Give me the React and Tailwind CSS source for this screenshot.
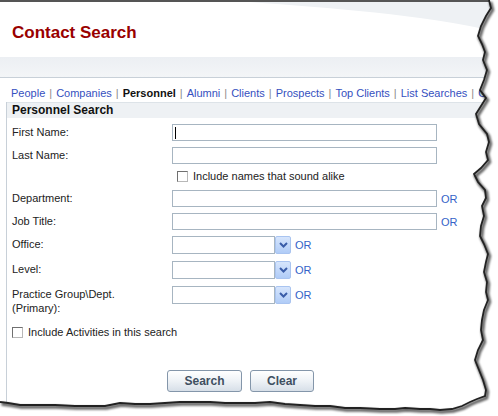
import React from 'react';

const tabs = ['People', 'Companies', 'Personnel', 'Alumni', 'Clients', 'Prospects', 'Top Clients', 'List Searches', 'Other'];

// torn paper outline, right side then bottom
const edge = [
  [489, 0], [491, 8], [486, 16], [481, 26], [478, 36], [482, 44], [485, 52], [483, 60], [487, 70], [484, 80],
  [480, 90], [486, 98], [481, 106], [476, 114], [479, 124], [487, 134], [489, 142], [486, 152], [488, 160],
  [481, 168], [474, 174], [478, 182], [485, 190], [486, 198], [482, 206], [484, 216], [481, 226], [480, 236],
  [484, 244], [488, 254], [486, 262], [484, 272], [487, 282], [486, 292], [488, 300], [484, 310], [482, 320],
  [481, 330], [483, 340], [478, 350], [475, 360], [479, 370], [483, 380], [486, 390], [485, 396], [477, 399],
  [470, 402], [462, 406], [452, 409], [440, 410], [430, 409], [420, 409], [405, 408], [395, 409], [380, 409],
  [360, 408], [345, 408], [330, 406], [315, 406], [300, 405], [285, 404], [270, 402], [255, 403], [240, 403],
  [225, 403], [210, 402], [195, 402], [180, 402], [165, 403], [150, 404], [135, 404], [120, 403], [105, 406],
  [90, 406], [75, 406], [55, 405], [35, 405], [20, 405], [8, 403], [0, 402],
];
const edgeLine = edge.map((p, i) => `${i ? 'L' : 'M'}${p[0]} ${p[1]}`).join(' ');

const TextInput = ({ caret }) => (
  <div className="w-[265px] h-[17px] border border-[#a7b5c1] bg-white relative">
    {caret && <div className="absolute left-[2px] top-[2px] w-px h-[12px] bg-black" />}
  </div>
);

const Select = () => (
  <div className="flex w-[119px] h-[18px]">
    <div className="flex-1 border border-[#a7b5c1] bg-white" />
    <div className="w-[16px] h-[18px] rounded-[2px] border border-[#a9c4f0] bg-gradient-to-b from-[#d6e5fc] to-[#b0ccf7] flex items-center justify-center">
      <svg width="9" height="6" viewBox="0 0 9 6">
        <path d="M1 1 L4.5 4.5 L8 1" fill="none" stroke="#3a5da8" strokeWidth="2" />
      </svg>
    </div>
  </div>
);

const Or = () => <span className="text-[#3563c8] ml-[4px] leading-[14px] mt-[2px]">OR</span>;

const Checkbox = () => (
  <div className="w-[11px] h-[11px] border border-[#707070] border-r-[#b8b8b8] border-b-[#b8b8b8] bg-white" />
);

const Row = ({ label, children, className = '' }) => (
  <div className={`flex items-start ${className}`}>
    <div className="w-[160px] leading-[14px] pt-px">{label}</div>
    {children}
  </div>
);

const Button = ({ children, w }) => (
  <button className={`${w} h-[22px] rounded-[3px] border border-[#8496aa] bg-gradient-to-b from-[#ffffff] via-[#eef2f6] to-[#d7dfe8] text-[12px] font-bold text-[#3f4f61]`}>
    {children}
  </button>
);

export default function App() {
  return (
    <div className="w-[498px] h-[416px] relative overflow-hidden bg-white text-[11px] text-[#222]" style={{ fontFamily: '"Liberation Sans", Arial, sans-serif' }}>
      {/* page header */}
      <div className="h-[57px] border-t-2 border-[#555] relative">
        <svg className="absolute inset-0" width="498" height="55" viewBox="0 0 498 55">
          <path d="M250 0 C 330 6, 420 12, 498 30 L498 0 Z" fill="#eef1f4" />
        </svg>
        <h1 className="relative pl-[12px] pt-[21px] text-[17px] leading-[20px] font-bold text-[#990000]">Contact Search</h1>
      </div>
      <div className="h-[21px] bg-gradient-to-b from-[#eceff3] to-[#f3f5f7] border-b border-[#c8d0d8]" />

      {/* tab links */}
      <div className="flex items-center h-[24px] pl-[11px] pt-[6px] whitespace-nowrap">
        {tabs.map((t, i) => (
          <React.Fragment key={t}>
            {i > 0 && <span className="text-[#8a8a8a] mx-[4px]">|</span>}
            <span className={t === 'Personnel' ? 'font-bold text-[#111]' : 'text-[#3550c0]'}>{t}</span>
          </React.Fragment>
        ))}
      </div>

      {/* search panel */}
      <div className="ml-[6px] border-l border-[#c8d0d8] h-[320px]">
        <div className="h-[16px] bg-[#eef1f4] border-t border-[#dde3e8] pl-[5px] font-bold text-[12px] leading-[15px] text-[#111]">Personnel Search</div>
        <div className="pl-[5px] pt-[6px]">
          <Row label="First Name:"><TextInput caret /></Row>
          <Row label="Last Name:" className="mt-[6px]"><TextInput /></Row>
          <div className="flex items-center mt-[6px] ml-[165px] h-[12px]">
            <Checkbox />
            <span className="ml-[5px] leading-[12px]">Include names that sound alike</span>
          </div>
          <Row label="Department:" className="mt-[8px]"><TextInput /><Or /></Row>
          <Row label="Job Title:" className="mt-[6px]"><TextInput /><Or /></Row>
          <Row label="Office:" className="mt-[6px]"><Select /><Or /></Row>
          <Row label="Level:" className="mt-[7px]"><Select /><Or /></Row>
          <Row label={<>Practice Group\Dept.<br />(Primary):</>} className="mt-[7px]"><Select /><Or /></Row>
          <div className="flex items-center mt-[11px] h-[12px]">
            <Checkbox />
            <span className="ml-[5px] leading-[12px]">Include Activities in this search</span>
          </div>
          <div className="flex gap-[8px] ml-[155px] mt-[32px]">
            <Button w="w-[75px]">Search</Button>
            <Button w="w-[64px]">Clear</Button>
          </div>
        </div>
      </div>

      {/* torn edge */}
      <svg className="absolute inset-0 pointer-events-none" width="498" height="416" viewBox="0 0 498 416">
        <defs>
          <filter id="soft" x="-10%" y="-10%" width="120%" height="120%">
            <feGaussianBlur stdDeviation="1.2" />
          </filter>
        </defs>
        <path d={`M0 0 H498 V416 H0 Z ${edgeLine} L0 0 Z`} fill="#fff" fillRule="evenodd" />
        <path d={edgeLine} transform="translate(1.5 2)" fill="none" stroke="#000" strokeWidth="3.5" opacity="0.6" filter="url(#soft)" />
        <path d={edgeLine} fill="none" stroke="#222" strokeWidth="1.8" />
      </svg>
    </div>
  );
}
